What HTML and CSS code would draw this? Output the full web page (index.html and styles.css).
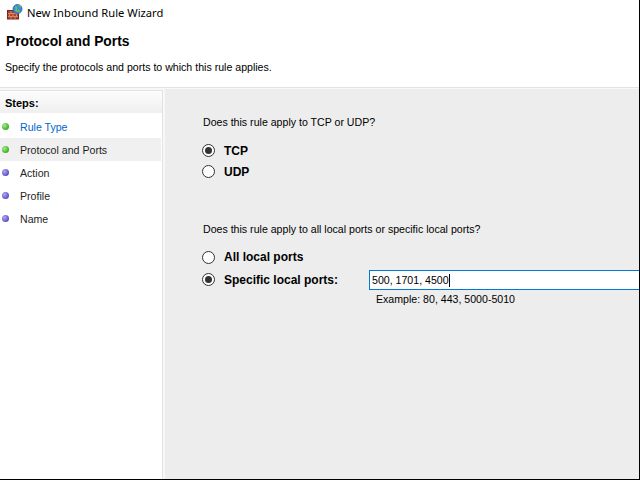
FILE: index.html
```html
<!DOCTYPE html>
<html>
<head>
<meta charset="utf-8">
<link rel="stylesheet" href="styles.css">
</head>
<body>
<div class="window">
  <div class="titlebar">
    <svg class="app-icon" width="16" height="16" viewBox="0 0 16 16">
      <rect x="0.5" y="6.5" width="11" height="8.5" fill="#a9452c" stroke="#6e2a1a" stroke-width="1"/>
      <path d="M1 9.5H11M1 12.5H11M4 7V9.5M8 7V9.5M2.5 9.5V12.5M6 9.5V12.5M9.5 9.5V12.5M4 12.5V15M8 12.5V15" stroke="#d9876a" stroke-width="1"/>
      <circle cx="10.5" cy="5" r="4.5" fill="#3a8be0" stroke="#1f5fa8" stroke-width="0.8"/>
      <path d="M8 2.5c1.5 0.5 2 1.5 1.2 2.8c-0.6 1 0.4 1.8 1.6 1.4c1-0.4 1.6 0.6 1.2 1.8M11.5 1c0.5 1 1.8 1.2 2.8 1.6" stroke="#6fc24a" stroke-width="1.6" fill="none"/>
    </svg>
    <span class="title">New Inbound Rule Wizard</span>
  </div>
  <div class="header">
    <div class="header-title">Protocol and Ports</div>
    <div class="header-desc">Specify the protocols and ports to which this rule applies.</div>
  </div>
  <div class="body">
    <div class="steps">
      <div class="steps-head">Steps:</div>
      <ul class="step-list">
        <li class="step done link"><span class="dot green"></span>Rule Type</li>
        <li class="step done current"><span class="dot green"></span>Protocol and Ports</li>
        <li class="step"><span class="dot blue"></span>Action</li>
        <li class="step"><span class="dot blue"></span>Profile</li>
        <li class="step"><span class="dot blue"></span>Name</li>
      </ul>
    </div>
    <div class="content">
      <p class="question q1">Does this rule apply to TCP or UDP?</p>
      <div class="radio-row"><span class="radio checked"></span><span class="radio-label">TCP</span></div>
      <div class="radio-row"><span class="radio"></span><span class="radio-label">UDP</span></div>
      <p class="question q2">Does this rule apply to all local ports or specific local ports?</p>
      <div class="radio-row all-row"><span class="radio"></span><span class="radio-label">All local ports</span></div>
      <div class="ports-row">
        <span class="radio checked"></span><span class="radio-label ports-label">Specific local ports:</span>
        <div class="ports-field">
          <div class="textbox">500, 1701, 4500<span class="caret"></span></div>
          <div class="example">Example: 80, 443, 5000-5010</div>
        </div>
      </div>
    </div>
  </div>
</div>
</body>
</html>
```
FILE: styles.css
```css
* { box-sizing: border-box; }
html, body { margin: 0; padding: 0; }
body {
  width: 640px;
  height: 480px;
  overflow: hidden;
  background: #ffffff;
  font-family: "Liberation Sans", Arial, sans-serif;
  font-size: 10.6px;
  color: #000;
}
.window {
  width: 640px;
  height: 480px;
  border-right: 1px solid #000;
  border-bottom: 1px solid #000;
  display: flex;
  flex-direction: column;
  background: #fff;
}
.titlebar {
  height: 25px;
  display: flex;
  align-items: center;
  padding-left: 7px;
  flex: none;
}
.app-icon { margin-top: -2px; }
.title {
  font-family: "Noto Sans", "Open Sans", sans-serif;
  font-size: 11.2px;
  margin-left: 4px;
  margin-top: -1px;
  color: #000;
}
.header {
  height: 63px;
  flex: none;
  border-bottom: 1px solid #e3e3e3;
  padding: 9px 0 0 6px;
}
.header-title {
  font-weight: bold;
  font-size: 13.8px;
  line-height: 16px;
}
.header-desc {
  margin-top: 10px;
  margin-left: -1px;
  line-height: 14px;
}
.body {
  flex: 1;
  display: flex;
  background: #f8f8f8;
  padding-top: 2px;
  gap: 2px;
  min-height: 0;
}
.steps {
  width: 163px;
  flex: none;
  background: #fff;
  border: 1px solid #e3e3e3;
  border-left: none;
  border-bottom: none;
}
.steps-head {
  height: 22px;
  background: linear-gradient(#fdfdfd, #efefef);
  font-weight: bold;
  line-height: 24px;
  padding-left: 5px;
  font-size: 11px;
}
.step-list {
  list-style: none;
  margin: 2px 0 0 0;
  padding: 0;
}
.step {
  height: 23px;
  display: flex;
  align-items: center;
  padding-left: 2px;
  color: #1e1e1e;
}
.step.link { color: #0066cc; }
.step.current { background: #f0f0f0; margin-right: 1px; }
.dot {
  width: 7px;
  height: 7px;
  border-radius: 50%;
  margin-right: 11px;
  flex: none;
}
.dot.green { background: radial-gradient(circle at 35% 35%, #a6ec8a, #3fae2a 70%); }
.dot.blue { background: radial-gradient(circle at 35% 35%, #b0a8f4, #5a50c8 70%); }
.content {
  flex: 1;
  background: #ededed;
  margin-top: -1px;
  padding: 26px 0 0 38px;
  min-width: 0;
}
.question {
  margin: 0;
  line-height: 14px;
}
.q1 { margin-bottom: 11px; }
.q2 { margin-top: 40px; margin-bottom: 10px; }
.radio-row {
  display: flex;
  align-items: center;
  height: 21px;
  margin-left: -1px;
}
.radio-row.all-row { height: 22px; }
.radio {
  width: 13px;
  height: 13px;
  border: 1px solid #333;
  border-radius: 50%;
  background: #fff;
  flex: none;
  margin-right: 9px;
  display: flex;
  align-items: center;
  justify-content: center;
}
.radio.checked::after {
  content: "";
  width: 7px;
  height: 7px;
  border-radius: 50%;
  background: #333;
}
.radio-label {
  font-weight: bold;
  font-size: 12px;
  color: #000;
}
.ports-row {
  display: flex;
  align-items: flex-start;
  margin-left: -1px;
  margin-top: 2px;
}
.ports-row .radio { margin-top: 3px; }
.ports-label { line-height: 20px; width: 145px; flex: none; }
.ports-field { flex: 1; }
.textbox {
  height: 20px;
  border: 1px solid #0078d7;
  border-right: none;
  background: #fff;
  padding-left: 2px;
  line-height: 18px;
  display: flex;
  align-items: center;
}
.caret {
  display: inline-block;
  width: 1px;
  height: 13px;
  background: #000;
}
.example {
  margin-top: 2px;
  padding-left: 7px;
  line-height: 14px;
}
```
